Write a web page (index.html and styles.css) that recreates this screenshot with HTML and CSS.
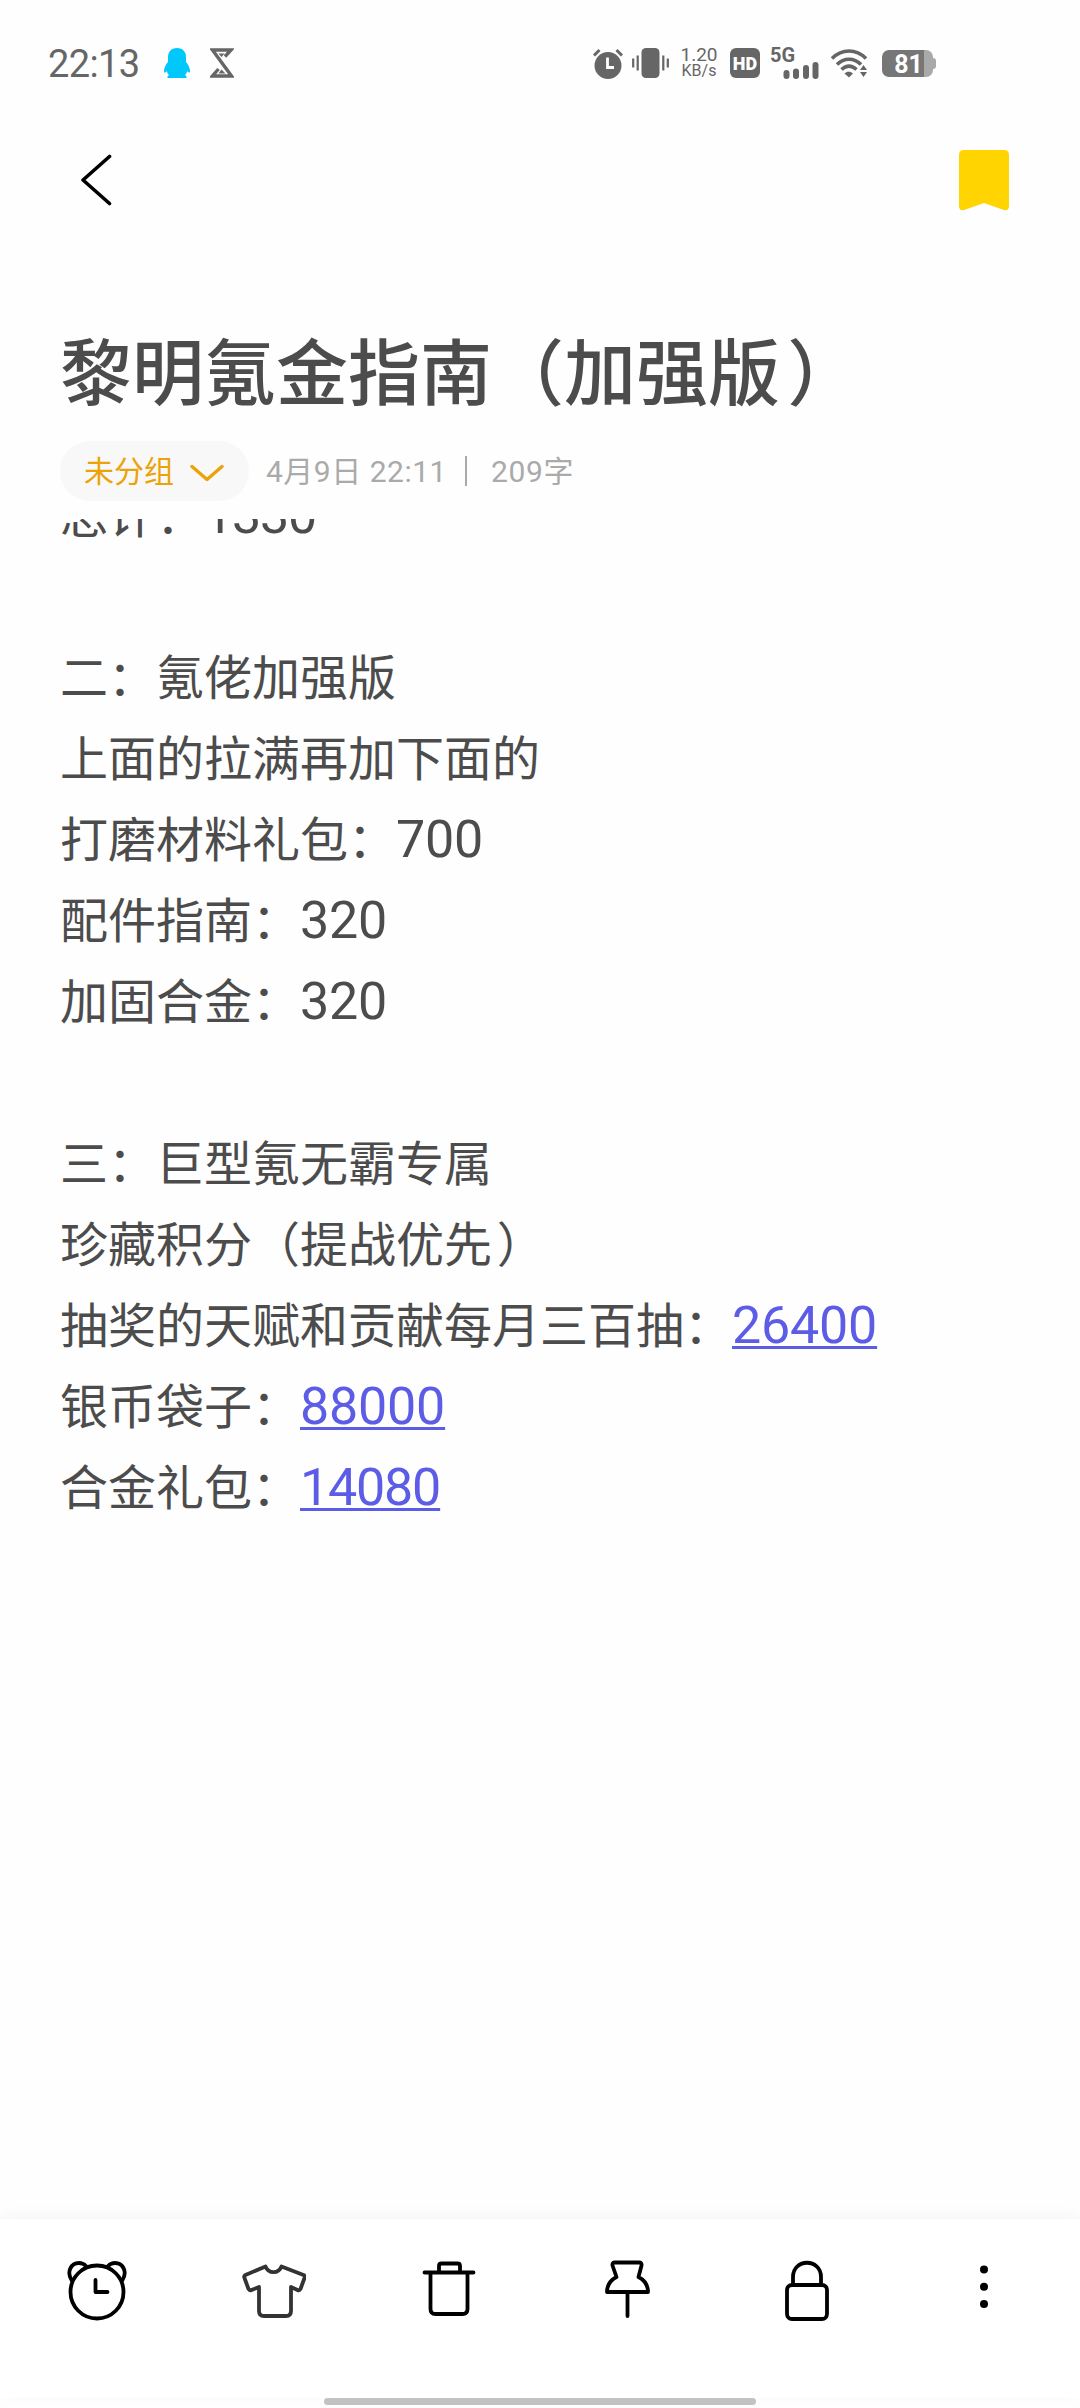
FILE: index.html
```html
<!doctype html>
<html lang="zh-CN">
   <head>
      <meta charset="utf-8">
      <title>黎明氪金指南（加强版）</title>
      <link rel="stylesheet" href="styles.css">
   </head>
   <body>
      <div class="status-bar">
         <span class="clock">22:13</span>
         <svg class="qq" width="26" height="31" viewBox="0 0 26 31">
            <path fill="#00c8fa" d="M13 0C7 0 4 4 4 9v5C2 16 0 20 0 23c0 2 1 2 3 0 0 2 1 3 2 4-2 1-2 3-1 3h18c1 0 1-2-1-3 1-1 2-2 2-4 2 2 3 2 3 0 0-3-2-7-4-9V9c0-5-3-9-9-9z"/>
         </svg>
         <svg class="hourglass" width="24" height="30" viewBox="0 0 24 30">
            <path d="M15 8.500l6-6.500H2.500l19 26H2.500l6-7" fill="none" stroke="#666" stroke-width="3.400"/>
            <path d="M8.500 5.500h6l-3 3.500zM8.500 25.500h7l-4-4z" fill="#666"/>
         </svg>

         <div class="status-icons">
            <svg class="s-alarm" width="30" height="31" viewBox="0 0 30 31">
               <circle cx="15" cy="17.500" r="13.500" fill="#666"/>
               <path d="M1 7.500l5.500-5.500M29 7.500L23.500 2" stroke="#666" stroke-width="3"/>
               <path d="M14.500 9.500v10h6.500" fill="none" stroke="#fff" stroke-width="2.800"/>
            </svg>
            <svg class="s-vibrate" width="37" height="30" viewBox="0 0 37 30">
               <rect x="9.500" width="18" height="30" rx="4.500" fill="#666"/>
               <path d="M1.200 10.500v9M5.700 7.500v15M31.300 7.500v15M35.800 10.500v9" stroke="#666" stroke-width="2.200"/>
            </svg>
            <div class="net-speed"><span>1.20</span><span>KB/s</span></div>
            <div class="hd">HD</div>
            <div class="signal">
               <span>5G</span>
               <svg width="36" height="17" viewBox="0 0 36 17">
                  <path d="M3.500 11v3M13 9.500v4.500M23 6v8M32.500 3v11" stroke="#666" stroke-width="6" stroke-linecap="round"/>
               </svg>
            </div>
            <svg class="s-wifi" width="37" height="29" viewBox="0 0 37 29">
               <g fill="none" stroke="#666" stroke-width="3.600">
                  <path d="M1 9.500C11-.5 25-.5 35 9.500"/>
                  <path d="M6 15.500c7-7 17-7 24 0"/>
                  <path d="M10.500 20.500c5-4.500 10-4.500 15 0"/>
               </g>
               <path d="M13.500 24.500c2.500-2.500 6-2.500 8.500 0L18 28.500z" fill="#666"/>
               <path d="M29 21l3.500-5 3.500 5zM29 23h7l-3.500 5z" fill="#666"/>
            </svg>
            <div class="battery"><span>81</span></div>
         </div>
      </div>

      <header>
         <svg width="32" height="52" viewBox="0 0 32 52">
            <path d="M29.500 2.500L3 26l26.500 23.500" fill="none" stroke="#000" stroke-width="3.600" stroke-linecap="round" stroke-linejoin="round"/>
         </svg>
         <svg width="50" height="61" viewBox="0 0 50 61">
            <path d="M5 0h40q5 0 5 5v51q0 5-5 4L25 53 5 60Q0 61 0 56V5q0-5 5-5z" fill="#ffd400"/>
         </svg>
      </header>

      <main>
         <h1>黎明氪金指南（加强版<span class="paren">）</span></h1>
         <div class="meta">
            <div class="group">
               <span>未分组</span>
               <svg width="34" height="18" viewBox="0 0 34 18">
                  <path d="M2 2.500l15 13 15-13" fill="none" stroke="#eba30a" stroke-width="3.400" stroke-linecap="round" stroke-linejoin="round"/>
               </svg>
            </div>
            <span class="date">4月9日 22:11</span>
            <span class="divider"></span>
            <span class="count">209字</span>
         </div>
         <div class="note">
            <p>总计：<span class="num tight">1330</span></p>
            <p></p>
            <p>二：氪佬加强版</p>
            <p>上面的拉满再加下面的</p>
            <p>打磨材料礼包：<span class="num">700</span></p>
            <p>配件指南：<span class="num">320</span></p>
            <p>加固合金：<span class="num">320</span></p>
            <p></p>
            <p>三：巨型氪无霸专属</p>
            <p>珍藏积分（提战优先<span class="paren">）</span></p>
            <p>抽奖的天赋和贡献每月三百抽：<a class="num">26400</a></p>
            <p>银币袋子：<a class="num">88000</a></p>
            <p>合金礼包：<a class="num tight">14080</a></p>
         </div>
      </main>

      <nav>
         <!-- reminder -->
         <svg viewBox="0 0 64 64">
            <circle cx="33" cy="35" r="26.500"/>
            <path d="M8 24C2 15 7 6 15 6q4 0 7 3M58 24c6-9 1-18-7-18q-4 0-7 3"/>
            <path d="M31.500 23v12h12"/>
         </svg>
         <!-- theme -->
         <svg class="shirt" viewBox="0 0 64 64">
            <path d="M23.500 9.500L3.500 18q-2 1-1 3l4 11q1 2 3 1l7.500-3v24q0 5 5 5h22q5 0 5-5V30l6.500 3q2 1 3-1l4-11q1-2-1-3L39.500 9.500C36.500 17 26.500 17 23.500 9.500z"/>
         </svg>
         <!-- delete -->
         <svg viewBox="0 0 64 64">
            <path d="M5.500 15.500h49M11.500 16v36q0 5 5 5h27q5 0 5-5V16M20 15V9q0-2.500 2.500-2.500h16Q41 6.500 41 9v6"/>
         </svg>
         <!-- pin -->
         <svg viewBox="0 0 64 64">
            <path d="M18 5.500h24q3 0 2.500 3L41.500 20C49 24 51 29 51 35H10c0-6 2-11 9.500-15L15.500 8.500q-.5-3 2.500-3zM30.500 35v24"/>
         </svg>
         <!-- lock -->
         <svg viewBox="0 0 64 64">
            <rect x="13" y="28" width="40" height="34" rx="5"/>
            <path d="M19 28V20c0-19 28-19 28 0v8"/>
         </svg>
         <!-- more -->
         <svg class="more" viewBox="0 0 64 64">
            <circle cx="32" cy="12.500" r="4"/>
            <circle cx="32" cy="29.700" r="4"/>
            <circle cx="32" cy="46.900" r="4"/>
         </svg>
      </nav>
      <div class="home-bar"></div>
   </body>
</html>
```
FILE: styles.css
```css
* {
   margin: 0;
   padding: 0;
   box-sizing: border-box;
}

body {
   height: 2408px;
   display: flex;
   flex-direction: column;
   overflow: hidden;
   background: #fefefe;
   color: #4c4c4c;
   font-family: Roboto, "Noto Sans CJK SC", sans-serif;
}

svg {
   display: block;
   flex: none;
}

/* Status bar */
.status-bar {
   height: 126px;
   padding-left: 48px;
   display: flex;
   align-items: center;
   color: #666;
}

.clock {
   width: 116px;
   padding-top: 2px;
   font-size: 38px;
   letter-spacing: -0.6px;
}

.hourglass {
   margin-left: 20px;
}

.status-icons {
   margin-left: 359px;
   display: flex;
   align-items: center;
}

.s-vibrate {
   margin-left: 9px;
}

.net-speed {
   width: 40px;
   margin-left: 10px;
   display: flex;
   flex-direction: column;
   align-items: center;
   font-size: 19px;
   line-height: 16px;
}

.net-speed span + span {
   font-size: 16px;
}

.hd {
   width: 30px;
   height: 30px;
   margin-left: 11px;
   border-radius: 6px;
   background: #666;
   color: #fff;
   font-size: 18px;
   font-weight: 900;
   line-height: 31px;
   text-align: center;
}

.signal {
   width: 49px;
   height: 31px;
   margin-left: 10px;
   font-size: 20px;
   font-weight: 700;
   line-height: 15px;
}

.signal svg {
   margin: -1px 0 0 13px;
}

.s-wifi {
   margin-left: 12px;
}

.battery {
   position: relative;
   width: 51px;
   height: 27px;
   margin-left: 14px;
   padding-left: 2px;
   border-radius: 7px;
   background: linear-gradient(to right, #767676 42px, #a9a9a9 42px);
   color: #fff;
   font-size: 25px;
   font-weight: 700;
   line-height: 29px;
   text-align: center;
}

.battery::after {
   content: "";
   position: absolute;
   left: 51px;
   top: 8px;
   width: 3px;
   height: 11px;
   border-radius: 0 3px 3px 0;
   background: #a9a9a9;
}

/* Header */
header {
   height: 108px;
   padding: 0 71px 0 80px;
   display: flex;
   justify-content: space-between;
   align-items: center;
}

/* Note */
main {
   flex: 1;
   min-height: 0;
   padding: 87px 60px 0;
   display: flex;
   flex-direction: column;
}

h1 {
   font-size: 72px;
   font-weight: 500;
   line-height: 108px;
   white-space: nowrap;
}

/* closing bracket sits a little away from the text */
.paren {
   margin-left: 0.1em;
}

.meta {
   height: 60px;
   margin-top: 12px;
   display: flex;
   align-items: center;
   color: #aaa;
   font-size: 30px;
   line-height: 60px;
}

.meta span {
   padding-top: 2px;
}

.group {
   width: 189px;
   height: 60px;
   padding-left: 24px;
   display: flex;
   align-items: center;
   border-radius: 30px;
   background: #f8f8f8;
   color: #eba30a;
}

.group svg {
   margin: 3px 0 0 16px;
}

.date {
   width: 199px;
   margin-left: 17px;
   letter-spacing: 0.5px;
   white-space: nowrap;
}

.divider {
   width: 2px;
   height: 30px;
   background: #aaa;
}

.count {
   margin-left: 24px;
   letter-spacing: 0.6px;
}

.note {
   flex: 1;
   min-height: 0;
   margin-top: 18px;
   overflow: hidden;
   font-size: 48px;
}

.note p {
   height: 81px;
   line-height: 81px;
   white-space: nowrap;
}

/* scrolled part way through the first line */
.note p:first-child {
   margin-top: -43px;
}

.num {
   font-size: 52px;
   line-height: 1;
   letter-spacing: -0.2px;
}

.num.tight {
   letter-spacing: -1.2px;
}

a.num {
   color: #5c5ce6;
   text-decoration: underline;
   text-decoration-thickness: 3px;
   text-underline-offset: 3px;
   text-decoration-skip-ink: none;
}

/* Bottom toolbar */
nav {
   height: 179px;
   padding: 38px 64px 0;
   display: flex;
   justify-content: space-between;
   background: #fff;
   box-shadow: 0 -4px 14px rgba(0, 0, 0, 0.035);
}

nav svg {
   width: 64px;
   height: 64px;
   fill: none;
   stroke: #000;
   stroke-width: 3.8;
   stroke-linecap: round;
   stroke-linejoin: round;
}

nav .shirt {
   stroke: #333;
}

nav .more {
   fill: #000;
   stroke: none;
}

.home-bar {
   width: 432px;
   height: 7px;
   margin: 0 auto 3px;
   border-radius: 4px;
   background: #c2c2c2;
}
```
